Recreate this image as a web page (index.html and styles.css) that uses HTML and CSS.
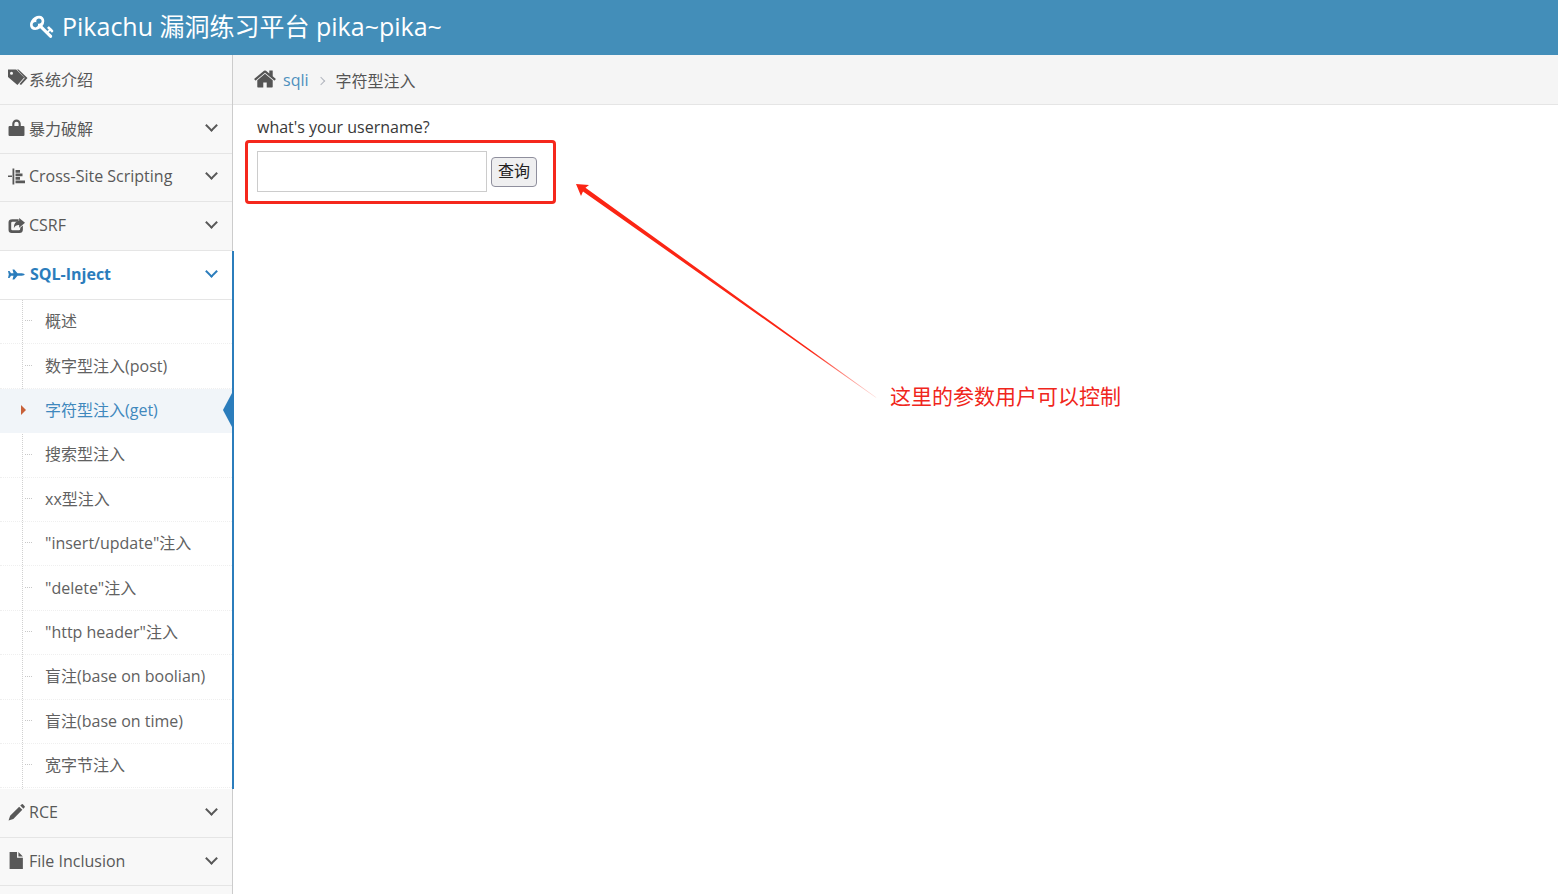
FILE: index.html
```html
<!DOCTYPE html>
<html lang="zh">
<head>
<meta charset="utf-8">
<title>Pikachu</title>
<link rel="stylesheet" href="styles.css">
</head>
<body>
<header class="topbar">
  <svg class="brand-icon" viewBox="0 0 1792 1792"><path d="M832 512q0-80-56-136t-136-56-136 56-56 136q0 42 19 83-41-19-83-19-80 0-136 56t-56 136 56 136 136 56 136-56 56-136q0-42-19-83 41 19 83 19 80 0 136-56t56-136zm851 704q0 17-49 66t-66 49q-9 0-28.5-16t-36.5-33-38.5-40-24.5-26l-96 96 220 220q28 28 28 68 0 42-39 81t-81 39q-40 0-68-28l-671-671q-176 131-365 131-163 0-265.5-102.5t-102.5-265.5q0-160 95-313t248-248 313-95q163 0 265.5 102.5t102.5 265.5q0 189-131 365l355 355 96-96q-3-3-26-24.5t-40-38.5-33-36.5-16-28.5q0-17 49-66t66-49q13 0 23 10 6 6 46 44.5t82 79.5 86.5 86 73 78 28.5 41z"/></svg>
  <span class="brand-text">Pikachu 漏洞练习平台 pika~pika~</span>
</header>
<div class="layout">
  <nav class="sidebar">
    <a class="nav-item nav-first">
      <svg class="nav-icon icon-tags" viewBox="0 0 20 16"><path d="M0 0h8.200l8 8-6.800 7.500L0 7.400zM3.500 2.200a1.500 1.500 0 1 0 0 3 1.500 1.500 0 0 0 0-3z" fill-rule="evenodd"/><path d="M10.500 0l9 8.500-6.500 7-1.500-1 5.300-6L9 0z"/></svg>
      <span class="nav-label">系统介绍</span>
    </a>
    <a class="nav-item">
      <svg class="nav-icon" viewBox="0 0 16 16"><path d="M4 6.500V4.500a4 4 0 0 1 8 0v2h2.500q1 0 1 1v7.500q0 1-1 1h-13q-1 0-1-1V7.500q0-1 1-1zm2 0h4V4.500a2 2 0 0 0-4 0z"/></svg>
      <span class="nav-label">暴力破解</span><span class="chev"></span>
    </a>
    <a class="nav-item">
      <svg class="nav-icon" viewBox="0 0 17 16"><path d="M4.500 0h1.800v16H4.500zM0 7h4v1.600H0zM7.500 1.500h4.500v2.800H7.500zM7.500 5h7v2.800h-7zM7.500 8.500h4.500v2.800H7.500zM7.500 12h9.500v2.800H7.500z"/></svg>
      <span class="nav-label">Cross-Site Scripting</span><span class="chev"></span>
    </a>
    <a class="nav-item">
      <svg class="nav-icon" viewBox="0 0 16 16"><path d="M4 2h6v2.500H4.200Q3 4.500 3 5.700v5.600Q3 12.500 4.200 12.500h6Q11.500 12.500 11.500 11.300V10l2.500-2v3.700Q14 15 10.700 15H3.500Q.5 15 .5 12V5Q.5 2 4 2z"/><path d="M10.500 1L16 5.500 10.500 10V7.500Q7 7.300 5.500 10.500 5.300 4 10.500 3.500z"/></svg>
      <span class="nav-label">CSRF</span><span class="chev"></span>
    </a>
    <div class="nav-group">
      <a class="nav-item nav-open">
        <svg class="nav-icon" viewBox="0 0 17 16"><path d="M0 4.500h1.500L3 6.700h2.500L4.500 3h1.800l3.200 3.700h4.300q2.800.5 3 1.300-.2.800-3 1.300H9.500L6.300 13H4.500l1-3.700H3L1.500 11.500H0L.8 8z"/></svg>
        <span class="nav-label">SQL-Inject</span><span class="chev"></span>
      </a>
      <ul class="submenu">
        <li class="sub-item"><span class="sub-dash"></span>概述</li>
        <li class="sub-item"><span class="sub-dash"></span>数字型注入(post)</li>
        <li class="sub-item sub-active"><span class="sub-arrow"></span>字符型注入(get)<span class="sub-caret"></span></li>
        <li class="sub-item"><span class="sub-dash"></span>搜索型注入</li>
        <li class="sub-item"><span class="sub-dash"></span>xx型注入</li>
        <li class="sub-item"><span class="sub-dash"></span>"insert/update"注入</li>
        <li class="sub-item"><span class="sub-dash"></span>"delete"注入</li>
        <li class="sub-item"><span class="sub-dash"></span>"http header"注入</li>
        <li class="sub-item"><span class="sub-dash"></span>盲注(base on boolian)</li>
        <li class="sub-item"><span class="sub-dash"></span>盲注(base on time)</li>
        <li class="sub-item"><span class="sub-dash"></span>宽字节注入</li>
      </ul>
    </div>
    <a class="nav-item nav-rce">
      <svg class="nav-icon" viewBox="0 0 16 16"><path d="M10.500 2.500l3 3L5 14l-4.500 1.500L2 11zM11.500 1.500L13 .3q.5-.4 1 0l1.700 1.700q.4.500 0 1L14.500 4.500z"/></svg>
      <span class="nav-label">RCE</span><span class="chev"></span>
    </a>
    <a class="nav-item">
      <svg class="nav-icon" viewBox="0 0 16 16"><path d="M1.500 0h7v5.500h5.500V16H1.500zM9.800 0L14 4.300H9.800z"/></svg>
      <span class="nav-label">File Inclusion</span><span class="chev"></span>
    </a>
    <div class="nav-item"></div>
  </nav>
  <main class="main">
    <div class="breadcrumb">
      <svg class="home-icon" viewBox="0 0 1792 1792"><path d="M1472 992v480q0 26-19 45t-45 19h-384v-384h-256v384h-384q-26 0-45-19t-19-45v-480q0-1 .5-3t.5-3l575-474 575 474q1 2 1 6zm223-69l-62 74q-8 9-21 11h-3q-13 0-21-7l-692-577-692 577q-12 8-24 7-13-2-21-11l-62-74q-8-10-7-23.5t11-21.5l719-599q32-26 76-26t76 26l244 204v-195q0-14 9-23t23-9h192q14 0 23 9t9 23v408l219 182q10 8 11 21.5t-7 23.5z"/></svg>
      <a class="crumb-link">sqli</a>
      <span class="crumb-sep"></span>
      <span class="crumb-current">字符型注入</span>
    </div>
    <div class="content">
      <p class="question">what's your username?</p>
      <form class="query-form">
        <input class="query-input" type="text">
        <button class="query-btn" type="button">查询</button>
      </form>
    </div>
  </main>
</div>
<div class="mark-box"></div>
<svg class="mark-arrow" viewBox="0 0 320 230"><defs><linearGradient id="arrow-fade" gradientUnits="userSpaceOnUse" x1="240" y1="170" x2="306" y2="217"><stop offset="0" stop-color="#fb2514"/><stop offset="1" stop-color="#fb2514" stop-opacity="0.15"/></linearGradient></defs><polygon fill="url(#arrow-fade)" points="6,4 19,5 15.500,7.800 306.500,217.500 305.500,217.500 13,11.500 11,16"/></svg>
<div class="mark-text">这里的参数用户可以控制</div>
</body>
</html>
```
FILE: styles.css
```css
* { box-sizing: border-box; }
html, body { margin: 0; height: 100%; overflow: hidden; background: #fff; }
body { font-family: "Open Sans", "Noto Sans CJK SC", sans-serif; font-size: 16px; color: #393939; position: relative; }

.topbar { height: 55px; background: #438eb9; display: flex; align-items: center; padding: 0 0 0 30px; color: #fff; }
.brand-icon { width: 25px; height: 25px; fill: #fff; margin: -2px 7px 0 0; flex: none; }
.brand-text { font-size: 25px; line-height: 53px; height: 55px; white-space: nowrap; }

.layout { display: flex; height: 839px; }
.sidebar { width: 233px; flex: none; background: #fff; border-right: 1px solid #ccc; }
.nav-item { display: flex; align-items: center; height: 48.8px; padding: 0 14px 2px 8px; background: #f8f8f8; color: #585858; border-bottom: 1px solid #e5e5e5; position: relative; }
.nav-first { height: 49.8px; padding-bottom: 1px; }
.nav-rce { height: 48.3px; }
.nav-icon { width: 17px; height: 17px; fill: #585858; flex: none; margin-right: 4px; }
.icon-tags { width: 20px; height: 17px; margin: -3px 1px 0 0; }
.nav-label { flex: 1; white-space: nowrap; }
.chev { width: 9px; height: 9px; border-right: 2px solid #585858; border-bottom: 2px solid #585858; transform: rotate(45deg); margin: -5px 2px 0 0; flex: none; }

.nav-group { position: relative; border-right: 2px solid #2b7dbc; width: 234px; }
.nav-open { background: #fff; color: #2b7dbc; font-weight: 700; width: 232px; }
.nav-open .nav-icon { fill: #2b7dbc; margin-right: 5px; }
.nav-open .chev { border-color: #2b7dbc; }

.submenu { list-style: none; margin: 0; padding: 0; position: relative; height: 489.4px; }
.submenu::before { content: ""; position: absolute; left: 22px; top: 0; bottom: 0; border-left: 1px dotted #d0d0d0; }
.sub-item { height: 44.4px; display: flex; align-items: center; padding: 0 0 3px 45px; color: #616161; border-bottom: 1px dotted #efefef; position: relative; white-space: nowrap; }
.sub-dash { position: absolute; left: 25px; top: 47%; width: 7px; border-top: 1px dotted #c8c8c8; }
.sub-active { background: #f1f5f9; color: #3f88bd; border-bottom: 0; }
.sub-arrow { position: absolute; left: 21px; top: 50%; margin-top: -6px; border-left: 5px solid #c86139; border-top: 5px solid transparent; border-bottom: 5px solid transparent; }
.sub-caret { position: absolute; right: 0; top: 50%; margin-top: -18px; border-right: 9px solid #2b7dbc; border-top: 17px solid transparent; border-bottom: 17px solid transparent; }

.main { flex: 1; min-width: 0; }
.breadcrumb { height: 50px; background: #f5f5f5; border-bottom: 1px solid #e5e5e5; display: flex; align-items: center; padding: 1px 0 0 20px; }
.home-icon { width: 24px; height: 24px; fill: #555; margin: -3px 6px 0 0; }
.crumb-link { color: #4c8fbd; }
.crumb-sep { width: 6px; height: 6px; border-top: 1px solid #b2b6bf; border-right: 1px solid #b2b6bf; transform: rotate(45deg); margin: 1px 12px 0 9px; }
.crumb-current { color: #555; }

.content { padding: 11px 0 0 24px; }
.question { margin: 0; line-height: 22px; height: 35px; white-space: nowrap; }
.query-form { display: flex; align-items: center; }
.query-input { width: 230px; height: 41px; border: 1px solid #ccc; background: #fff; padding: 0; margin: 0; }
.query-btn { width: 46px; height: 30px; margin: 0 0 0 4px; padding: 0 0 3px; background: #efeff0; border: 1px solid #8f8f9d; border-radius: 4px; font: 16px "Noto Sans CJK SC", sans-serif; color: #222; }

.mark-box { position: absolute; left: 245px; top: 140px; width: 311px; height: 64px; border: 3px solid #f5281c; border-radius: 4px; }
.mark-arrow { position: absolute; left: 570px; top: 180px; width: 320px; height: 230px; fill: #fb2514; }
.mark-text { position: absolute; left: 890px; top: 379px; font-size: 21px; line-height: 32px; color: #f0261c; white-space: nowrap; font-family: "Noto Sans CJK SC", sans-serif; }
```
